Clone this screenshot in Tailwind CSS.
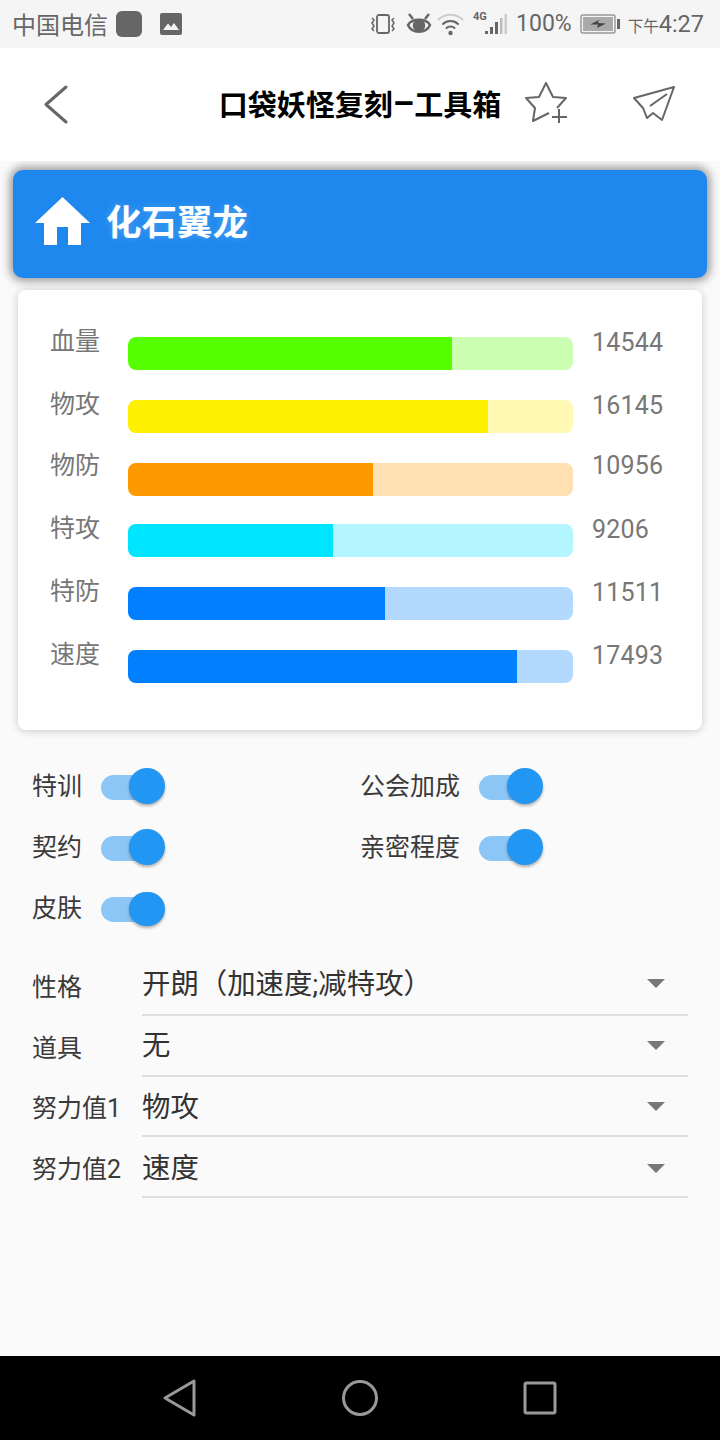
<!DOCTYPE html>
<html lang="zh">
<head>
<meta charset="utf-8">
<script src="https://cdn.jsdelivr.net/npm/@tailwindcss/browser@4"></script>
</head>
<body class="m-0">
<div class="w-[720px] h-[1440px] flex flex-col overflow-hidden bg-[#fafafa] font-['Roboto','Noto_Sans_CJK_SC',sans-serif]">
  <!-- status bar -->
  <div class="h-[48px] shrink-0 bg-[#f5f5f5] flex items-center pl-[12px] pr-[16px] text-[#666]">
    <span class="text-[24px] leading-[48px] font-['Noto_Sans_CJK_SC',sans-serif]">中国电信</span>
    <div class="w-[26px] h-[26px] rounded-[6px] bg-[#666] ml-[8px]"></div>
    <svg class="ml-[18px]" width="22" height="22" viewBox="0 0 22 22"><rect x="0" y="0" width="22" height="22" rx="2" fill="#666"/><path d="M3 17 8 10.500l3 3.500 3-4 5 7z" fill="#f5f5f5"/></svg>
    <div class="flex-1"></div>
    <svg width="26" height="24" viewBox="0 0 26 24" fill="none" stroke="#666" stroke-width="1.800"><rect x="7" y="3" width="12" height="18" rx="2"/><path d="M2 6l2 2-2 3 2 3-2 3 2 2M24 6l-2 2 2 3-2 3 2 3-2 2" stroke-width="1.500"/></svg>
    <svg class="ml-[10px]" width="26" height="24" viewBox="0 0 26 24" fill="none" stroke="#666" stroke-width="2.500"><path d="M2 13C6 6 20 6 24 13 20 22 6 22 2 13z"/><circle cx="13" cy="13.500" r="5" fill="#666"/><path d="M3 2l4 5M23 2l-4 5" stroke-width="2.500"/></svg>
    <svg class="ml-[5px]" width="27" height="24" viewBox="0 0 27 24" fill="none" stroke-linecap="round"><path d="M1.500 7.500C8 1 19 1 25.500 7.500" stroke="#ccc" stroke-width="2"/><path d="M6 12c4-4 11-4 15 0M9.500 16c2-2 6-2 8 0" stroke="#666" stroke-width="2"/><circle cx="13.500" cy="21" r="2.200" fill="#666"/></svg>
    <div class="ml-[9px] w-[36px] h-[24px] flex items-end relative">
      <span class="absolute left-0 top-[-2px] text-[11px] font-bold leading-[14px] text-[#666]">4G</span>
      <svg width="36" height="24" viewBox="0 0 36 24"><rect x="12" y="19" width="3" height="3" fill="#666"/><rect x="17" y="15" width="3" height="7" fill="#666"/><rect x="22" y="10" width="3" height="12" fill="#666"/><rect x="27" y="6" width="2.500" height="16" fill="#bbb"/><rect x="31.500" y="2" width="2.500" height="20" fill="#ccc"/></svg>
    </div>
    <span class="ml-[7px] text-[23px] leading-[48px] text-[#666]">100%</span>
    <svg class="ml-[8px]" width="40" height="20" viewBox="0 0 40 20"><rect x="1" y="1" width="34" height="18" rx="2" fill="none" stroke="#999" stroke-width="1.500"/><rect x="3" y="3" width="30" height="14" fill="#aaa"/><rect x="37" y="5" width="3" height="10" fill="#666"/><path d="M10 10.500 19 6l-1 3 8 .5-9 4.500 1-3.500z" fill="#444"/></svg>
    <span class="ml-[8px] flex items-baseline leading-[48px] text-[#666]"><span class="text-[15.500px] font-['Noto_Sans_CJK_SC',sans-serif]">下午</span><span class="text-[23.500px]">4:27</span></span>
  </div>
  <!-- header -->
  <div class="h-[113px] shrink-0 bg-white relative flex items-center justify-center pb-[4px]">
    <svg class="absolute left-[44px] top-[37px]" width="25" height="39" viewBox="0 0 25 39" fill="none" stroke="#666" stroke-width="3" stroke-linecap="round" stroke-linejoin="round"><path d="M22 2 2 19.500 22 37"/></svg>
    <span class="flex items-center text-[29px] font-bold text-black leading-[40px] font-['Noto_Sans_CJK_SC',sans-serif]">口袋妖怪复刻<span class="font-['Roboto',sans-serif] text-[34px] font-bold">–</span>工具箱</span>
    <svg class="absolute left-[525px] top-[34px]" width="44" height="42" viewBox="0 0 44 42" fill="none" stroke="#666" stroke-width="2" stroke-linejoin="round"><path d="M24 31 8 39 10 26 1 16 14 15 21 1 28 15 41 16 32 26"/><path d="M27 35H42M34 27V41"/></svg>
    <svg class="absolute left-[633px] top-[38px]" width="44" height="36" viewBox="0 0 44 36" fill="none" stroke="#666" stroke-width="2" stroke-linejoin="round"><path d="M1 12 41 1 29 34 20 27 14 32 10 22z"/><path d="M34 8 17 20"/></svg>
  </div>
  <!-- content -->
  <div class="flex-1 pt-[9px] flex flex-col">
    <div class="mx-[13px] h-[108px] rounded-[10px] bg-[#1e88ee] shadow-[0_0_10px_3px_rgba(0,0,0,0.4)] flex items-center pl-[21px] pb-[6px]">
      <svg width="57" height="50" viewBox="0 0 57 50"><path d="M28.500 1 56 27H47V49H34V31H23V49H10V27H1z" fill="#fff"/></svg>
      <span class="ml-[15px] -mt-[3px] text-[35.500px] font-bold text-white font-['Noto_Sans_CJK_SC',sans-serif] [text-shadow:0_0_8px_rgba(255,255,255,0.2)]">化石翼龙</span>
    </div>
    <div class="mx-[18px] mt-[12px] h-[440px] rounded-[8px] bg-white shadow-[0_1px_8px_rgba(0,0,0,0.2)] pl-[33px] pt-[47px]">
      <div class="flex h-[33px] mb-[30px]">
        <span class="w-[77px] -ml-px mr-px -mt-[11px] text-[25px] leading-[32px] text-[#777]">血量</span>
        <div class="w-[445px] h-[33px] rounded-[8px] bg-[#ccffb3] overflow-hidden"><div class="w-[324px] h-full rounded-l-[8px] bg-[#55ff00]"></div></div>
        <span class="ml-[19px] -mt-[10px] text-[25px] tracking-[0.2px] leading-[32px] text-[#777]">14544</span>
      </div>
      <div class="flex h-[33px] mb-[30px]">
        <span class="w-[77px] -ml-px mr-px -mt-[11px] text-[25px] leading-[32px] text-[#777]">物攻</span>
        <div class="w-[445px] h-[33px] rounded-[8px] bg-[#fff9b3] overflow-hidden"><div class="w-[360px] h-full bg-[#fff000]"></div></div>
        <span class="ml-[19px] -mt-[10px] text-[25px] tracking-[0.2px] leading-[32px] text-[#777]">16145</span>
      </div>
      <div class="flex h-[33px] mb-[28px]">
        <span class="w-[77px] -ml-px mr-px -mt-[13px] text-[25px] leading-[32px] text-[#777]">物防</span>
        <div class="w-[445px] h-[33px] rounded-[8px] bg-[#ffe0b3] overflow-hidden"><div class="w-[245px] h-full bg-[#ff9900]"></div></div>
        <span class="ml-[19px] -mt-[13px] text-[25px] tracking-[0.2px] leading-[32px] text-[#777]">10956</span>
      </div>
      <div class="flex h-[33px] mb-[30px]">
        <span class="w-[77px] -ml-px mr-px -mt-[11px] text-[25px] leading-[32px] text-[#777]">特攻</span>
        <div class="w-[445px] h-[33px] rounded-[8px] bg-[#b3f6ff] overflow-hidden"><div class="w-[205px] h-full bg-[#00e5ff]"></div></div>
        <span class="ml-[19px] -mt-[10px] text-[25px] tracking-[0.2px] leading-[32px] text-[#777]">9206</span>
      </div>
      <div class="flex h-[33px] mb-[30px]">
        <span class="w-[77px] -ml-px mr-px -mt-[11px] text-[25px] leading-[32px] text-[#777]">特防</span>
        <div class="w-[445px] h-[33px] rounded-[8px] bg-[#b3d9ff] overflow-hidden"><div class="w-[257px] h-full bg-[#0080ff]"></div></div>
        <span class="ml-[19px] -mt-[10px] text-[25px] tracking-[0.2px] leading-[32px] text-[#777]">11511</span>
      </div>
      <div class="flex h-[33px]">
        <span class="w-[77px] -ml-px mr-px -mt-[11px] text-[25px] leading-[32px] text-[#777]">速度</span>
        <div class="w-[445px] h-[33px] rounded-[8px] bg-[#b3d9ff] overflow-hidden"><div class="w-[389px] h-full bg-[#0080ff]"></div></div>
        <span class="ml-[19px] -mt-[10px] text-[25px] tracking-[0.2px] leading-[32px] text-[#777]">17493</span>
      </div>
    </div>
    <!-- toggles -->
    <div class="pl-[32px] pt-[38px] h-[200px] shrink-0 grid grid-cols-[328px_1fr] auto-rows-[37px] gap-y-[24px] text-[25px] text-[#3a3a3a] leading-[37px]">
      <div class="flex items-center"><span class="w-[69px]">特训</span><div class="relative w-[64px] h-[37px]"><div class="absolute left-0 top-[7px] w-[50px] h-[25px] rounded-full bg-[#8cc6f6]"></div><div class="absolute left-[28px] top-0 w-[36px] h-[36px] rounded-full bg-[#2196f3] shadow-[0_2px_3px_rgba(0,0,0,0.3)]"></div></div></div>
      <div class="flex items-center"><span class="w-[119px]">公会加成</span><div class="relative w-[64px] h-[37px]"><div class="absolute left-0 top-[7px] w-[50px] h-[25px] rounded-full bg-[#8cc6f6]"></div><div class="absolute left-[28px] top-0 w-[36px] h-[36px] rounded-full bg-[#2196f3] shadow-[0_2px_3px_rgba(0,0,0,0.3)]"></div></div></div>
      <div class="flex items-center"><span class="w-[69px]">契约</span><div class="relative w-[64px] h-[37px]"><div class="absolute left-0 top-[7px] w-[50px] h-[25px] rounded-full bg-[#8cc6f6]"></div><div class="absolute left-[28px] top-0 w-[36px] h-[36px] rounded-full bg-[#2196f3] shadow-[0_2px_3px_rgba(0,0,0,0.3)]"></div></div></div>
      <div class="flex items-center"><span class="w-[119px]">亲密程度</span><div class="relative w-[64px] h-[37px]"><div class="absolute left-0 top-[7px] w-[50px] h-[25px] rounded-full bg-[#8cc6f6]"></div><div class="absolute left-[28px] top-0 w-[36px] h-[36px] rounded-full bg-[#2196f3] shadow-[0_2px_3px_rgba(0,0,0,0.3)]"></div></div></div>
      <div class="flex items-center"><span class="w-[69px]">皮肤</span><div class="relative w-[64px] h-[37px]"><div class="absolute left-0 top-[7px] w-[50px] h-[25px] rounded-full bg-[#8cc6f6]"></div><div class="absolute left-[28px] top-[2px] w-[36px] h-[34px] rounded-full bg-[#2196f3] shadow-[0_2px_3px_rgba(0,0,0,0.3)]"></div></div></div>
    </div>
    <!-- selects -->
    <div class="mt-[25px] pl-[32px] flex flex-col">
      <div class="flex h-[61px]"><span class="w-[110px] pt-[13px] text-[25px] leading-[40px] text-[#3a3a3a]">性格</span><div class="w-[546px] h-[61px] border-b-2 border-[#ddd] flex items-start pr-[23px]"><span class="flex-1 text-[28.400px] leading-[40px] pt-[10px] text-[#333]">开朗（加速度;减特攻）</span><div class="mt-[24px] w-0 h-0 border-l-[9px] border-r-[9px] border-t-[9px] border-l-transparent border-r-transparent border-t-[#777]"></div></div></div>
      <div class="flex h-[61px]"><span class="w-[110px] pt-[13px] text-[25px] leading-[40px] text-[#3a3a3a]">道具</span><div class="w-[546px] h-[61px] border-b-2 border-[#ddd] flex items-start pr-[23px]"><span class="flex-1 text-[28.400px] leading-[40px] pt-[10px] text-[#333]">无</span><div class="mt-[25px] w-0 h-0 border-l-[9px] border-r-[9px] border-t-[9px] border-l-transparent border-r-transparent border-t-[#777]"></div></div></div>
      <div class="flex h-[60px]"><span class="w-[110px] pt-[12px] text-[25px] leading-[40px] text-[#3a3a3a]">努力值1</span><div class="w-[546px] h-[60px] border-b-2 border-[#ddd] flex items-start pr-[23px]"><span class="flex-1 text-[28.400px] leading-[40px] pt-[11px] text-[#333]">物攻</span><div class="mt-[25px] w-0 h-0 border-l-[9px] border-r-[9px] border-t-[9px] border-l-transparent border-r-transparent border-t-[#777]"></div></div></div>
      <div class="flex h-[61px]"><span class="w-[110px] pt-[13px] text-[25px] leading-[40px] text-[#3a3a3a]">努力值2</span><div class="w-[546px] h-[61px] border-b-2 border-[#ddd] flex items-start pr-[23px]"><span class="flex-1 text-[28.400px] leading-[40px] pt-[12px] text-[#333]">速度</span><div class="mt-[27px] w-0 h-0 border-l-[9px] border-r-[9px] border-t-[9px] border-l-transparent border-r-transparent border-t-[#777]"></div></div></div>
    </div>
  </div>
  <!-- nav bar -->
  <div class="h-[84px] shrink-0 bg-black flex items-center justify-center gap-[132px]">
    <svg width="48" height="48" viewBox="0 0 48 48" fill="none" stroke="#999" stroke-width="3" stroke-linejoin="round"><path d="M9 24 38 7V41z"/></svg>
    <svg width="48" height="48" viewBox="0 0 48 48" fill="none" stroke="#999" stroke-width="3"><circle cx="24" cy="24" r="16.500"/></svg>
    <svg width="48" height="48" viewBox="0 0 48 48" fill="none" stroke="#999" stroke-width="3" stroke-linejoin="round"><rect x="9" y="9" width="30" height="30" rx="1.500"/></svg>
  </div>
</div>
</body>
</html>
